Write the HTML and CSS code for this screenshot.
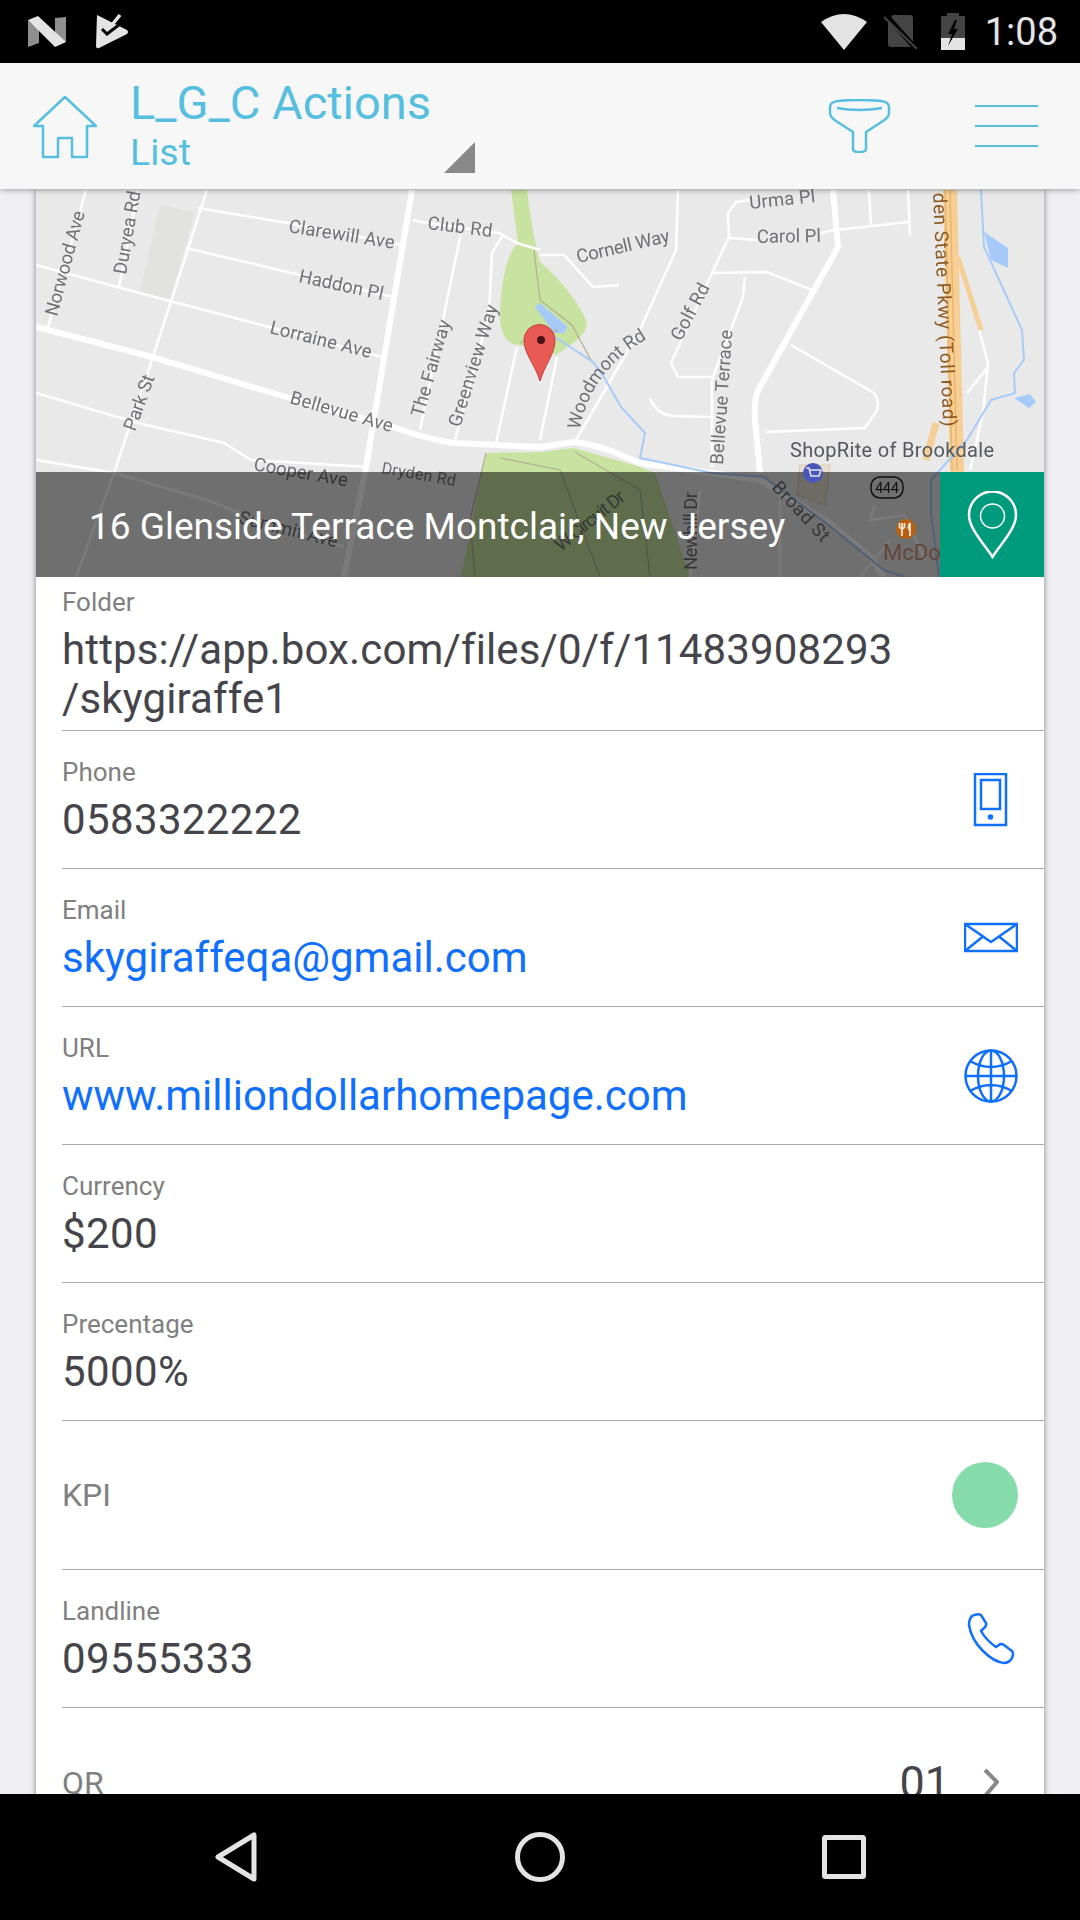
FILE: index.html
```html
<!DOCTYPE html>
<html lang="en">
<head>
<meta charset="utf-8">
<title>L_G_C Actions</title>
<link rel="stylesheet" href="styles.css">
</head>
<body>
<div class="screen">
  <div class="statusbar">
    <svg class="st-n" viewBox="0 0 38 31"><polygon fill="#8f8f8f" points="0,4 11,14 11,27 0,31"/><polygon fill="#8f8f8f" points="27,2 38,1 38,26 27,19"/><polygon fill="#e4e4e4" points="10,0 38,26 27,31 0,4"/></svg>
    <svg class="st-check" viewBox="0 0 32 34"><path fill="#e4e4e4" d="M1 0 L31 15 Q33 17 31 19 L3 33 Q0 34 0 31 Z"/><path fill="none" stroke="#e4e4e4" stroke-width="3.5" d="M15 11 L24 0"/><path fill="none" stroke="#000" stroke-width="3" d="M6 14 L11 19 L28 6"/></svg>
    <div class="st-space"></div>
    <svg class="st-wifi" viewBox="0 0 46 36"><path fill="#e4e4e4" d="M23 36 L0 8 Q23 -8 46 8 Z"/></svg>
    <svg class="st-sim" viewBox="0 0 33 34"><path fill="#444" d="M9 0 H26 Q29 0 29 3 V29 Q29 32 26 32 H7 Q4 32 4 29 V5 Z"/><path stroke="#000" stroke-width="5" d="M2 0 L33 35"/><path stroke="#444" stroke-width="2" d="M0 2 L33 34"/></svg>
    <svg class="st-batt" viewBox="0 0 24 37"><path fill="#444" d="M6 0 H18 V3 H24 V25 H0 V3 H6 Z"/><rect fill="#e4e4e4" y="25" width="24" height="12"/><path fill="#000" d="M14 7 L7 21 H11 L7 33 L17 16 H13 L16 7 Z"/></svg>
    <span class="st-time">1:08</span>
  </div>

  <header class="topbar">
    <svg class="ic-home" viewBox="0 0 64 63"><path d="M1 30 L32 1 L63 30 H54 V61 H39 V42 H25 V61 H10 V30 Z"/></svg>
    <div class="titles">
      <div class="title">L_G_C Actions</div>
      <div class="subtitle">List</div>
    </div>
    <div class="corner"></div>
    <div class="st-space"></div>
    <svg class="ic-funnel" viewBox="0 0 63 54"><path d="M2 8 Q2 3 10 2 Q31 0 53 2 Q61 3 61 8 V14 Q61 18 55 22 L38 33 V50 Q38 53 31 53 Q25 53 25 50 V33 L8 22 Q2 18 2 14 Z"/><path d="M9 9 Q31 13 54 9"/></svg>
    <div class="burger"><i></i><i></i><i></i></div>
  </header>

  <main class="content">
    <div class="card">
      <section class="map">
        <svg class="map-canvas" viewBox="36 189 1008 388">
          <rect x="36" y="189" width="1008" height="388" fill="#e9e9e9"/>
          <polygon fill="#e2e3df" points="160,205 195,212 170,300 140,292"/>
          <path class="park" d="M511 190 L518 243 C505 255 500 290 500 322 C503 340 510 345 520 345 L556 355 C570 345 590 335 586 320 C575 295 555 275 540 262 C535 245 530 215 527 190 Z"/>
          <path class="park" d="M486 453 L461 577 L690 577 L655 473 L640 467 L574 448 L540 452 Z"/>
          <path fill="#a6cbfa" d="M540 303 L568 327 L564 333 L554 333 L535 307 Z"/>
          <path class="trail" d="M534 250 L540 300 L572 325 L592 362 M520 343 L558 330"/>
          <path class="trail" d="M486 453 L470 520 L475 577 M500 458 L560 470 L600 577 M575 452 L640 490 L650 577"/>
          <g class="r-thin">
            <path d="M198 208 L288 223 L403 245"/>
            <path d="M413 220 L427 223 L499 233 L517 243 L540 250"/>
            <path d="M186 248 L300 275 L393 297"/>
            <path d="M36 265 L117 287 L269 327 L382 357"/>
            <path d="M207 190 L152 360 L114 473 L76 577"/>
            <path d="M86 190 L48 327"/>
            <path d="M138 190 L119 287"/>
            <path d="M36 393 L138 423 L224 443 L251 460 L368 467"/>
            <path d="M36 460 L114 473 L207 500 L276 527 L344 547"/>
            <path d="M461 233 L420 430"/>
            <path d="M503 235 L492 253 L489 313 L455 440"/>
            <path d="M517 347 L496 443"/>
            <path d="M557 357 L540 440"/>
            <path d="M540 255 L564 255 L593 287 L619 285"/>
            <path d="M678 190 L676 250 L640 330 L576 440"/>
            <path d="M750 200 L736 202 L728 213 L729 237 L712 273 L671 363 L678 377 L712 377"/>
            <path d="M729 238 L757 240 M820 233 L836 230 L908 222"/>
            <path d="M869 190 L871 225 M908 190 L910 235"/>
            <path d="M712 273 L767 272 L812 290"/>
            <path d="M745 277 L743 297 L712 380 L712 467"/>
            <path d="M650 398 Q656 415 675 416 L712 417"/>
            <path d="M791 345 L874 393 Q880 402 877 410 L865 428 L766 432"/>
            <path d="M988 367 L967 393 M979 330 L988 363 L983 413 L970 470"/>
            <path d="M700 490 L690 577 M780 490 L780 577 M890 540 L860 577"/>
            <path d="M875 505 L870 520 L905 515 L925 560"/>
          </g>
          <g class="r-high">
            <path d="M950 190 L957 470 L967 577" stroke-width="14"/>
            <path d="M958 257 L981 330" stroke-width="5"/>
            <path d="M936 423 L926 460" stroke-width="7"/>
          </g>
          <path class="r-high-line" d="M950 190 L957 470 M945 190 L952 470"/>
          <g class="r-major">
            <path d="M36 327 L152 357 L286 397 L393 427 Q430 440 455 443 L540 447 L574 442 Q590 444 609 450 L640 463 L712 473 L760 480 L826 520 L871 557 L884 577"/>
            <path d="M412 190 L365 473 L344 577"/>
            <path d="M833 190 L838 247 L760 387 Q752 400 756 430 L760 473"/>
          </g>
          <g class="water">
            <path d="M981 190 L984 247 L1022 330 L1024 360 L1014 373 L1015 393 L991 400 L967 440 L931 480 L931 513 L939 577"/>
            <path d="M555 337 L593 362 L604 377 L621 407 L645 433 L640 458 L712 473 L764 477 L826 523 L884 570 L905 577"/>
          </g>
          <path fill="#a6cbfa" d="M984 232 L1008 248 L1008 268 L991 260 Z"/>
          <path fill="#a6cbfa" d="M1014 398 L1030 394 L1036 402 L1029 408 Z"/>

          <text class="m" x="57" y="317" textLength="108" transform="rotate(-75 57 317)">Norwood Ave</text>
          <text class="m" x="126" y="275" textLength="84" transform="rotate(-80 126 275)">Duryea Rd</text>
          <text class="m" x="135" y="432" textLength="58" transform="rotate(-70 135 432)">Park St</text>
          <text class="m" x="288" y="232" textLength="107" transform="rotate(9 288 232)">Clarewill Ave</text>
          <text class="m" x="427" y="229" textLength="65" transform="rotate(7 427 229)">Club Rd</text>
          <text class="m" x="298" y="282" textLength="86" transform="rotate(12 298 282)">Haddon Pl</text>
          <text class="m" x="269" y="333" textLength="104" transform="rotate(14 269 333)">Lorraine Ave</text>
          <text class="m" x="289" y="403" textLength="106" transform="rotate(16 289 403)">Bellevue Ave</text>
          <text class="m" x="423" y="418" textLength="100" transform="rotate(-74 423 418)">The Fairway</text>
          <text class="m" x="460" y="428" textLength="127" transform="rotate(-72.5 460 428)">Greenview Way</text>
          <text class="m" x="253" y="470" textLength="95" transform="rotate(10 253 470)">Cooper Ave</text>
          <text class="m m-sm" x="381" y="473" textLength="75" transform="rotate(10 381 473)">Dryden Rd</text>
          <text class="m" x="238" y="523" textLength="101" transform="rotate(14 238 523)">Summit Ave</text>
          <text class="m" x="578" y="263" textLength="95" transform="rotate(-13 578 263)">Cornell Way</text>
          <text class="m" x="750" y="209" textLength="66" transform="rotate(-6 750 209)">Urma Pl</text>
          <text class="m" x="757" y="243" textLength="64" transform="rotate(-1 757 243)">Carol Pl</text>
          <text class="m" x="681" y="342" textLength="62" transform="rotate(-62 681 342)">Golf Rd</text>
          <text class="m" x="723" y="465" textLength="135" transform="rotate(-86 723 465)">Bellevue Terrace</text>
          <path id="woodmont" fill="none" d="M580 430 Q590 372 645 340"/>
          <text class="m"><textPath href="#woodmont">Woodmont Rd</textPath></text>
          <text class="m m-road" x="933" y="193" textLength="234" transform="rotate(87.5 933 193)">den State Pkwy (Toll road)</text>
          <text class="m m-poi" x="790" y="457" textLength="204">ShopRite of Brookdale</text>
          <polygon fill="#e6dfd2" stroke="#d9c9b0" points="800,465 830,465 825,505 797,495"/>
          <rect x="871" y="477" width="32" height="21" rx="9" fill="#e9e9e9" stroke="#222" stroke-width="1.5"/>
          <text class="m m-sh" x="887" y="493">444</text>
          <text class="m" x="771" y="488" textLength="75" transform="rotate(47 771 488)">Broad St</text>
          <text class="m" x="561" y="552" textLength="84" transform="rotate(-39 561 552)">W Circuit Dr</text>
          <text class="m" x="697" y="570" textLength="78" transform="rotate(-90 697 570)">Newhill Dr</text>
          <text class="m m-food" x="883" y="560">McDon</text>
          <path d="M540 381 C535 364 524 354 524 340 A15.5 15.5 0 0 1 555 340 C555 354 545 364 540 381 Z" fill="#ea5a54" stroke="#c5403c"/>
          <circle cx="541" cy="340" r="4" fill="#4a1210"/>
        </svg>
        <div class="map-bar">
          <div class="map-address">16 Glenside Terrace Montclair, New Jersey</div>
          <div class="map-pin">
            <svg class="ic-pin" viewBox="0 0 51 68"><path d="M25.5 66 C18 54 2 38 2 24 A23.5 23.5 0 0 1 49 24 C49 38 33 54 25.5 66 Z"/><circle class="thin" cx="25.5" cy="25" r="12"/></svg>
          </div>
        </div>
        <svg class="map-markers" viewBox="36 189 1008 388">
          <circle cx="813" cy="473" r="10" fill="#4a55b8"/>
          <path fill="none" stroke="#dfe2f5" stroke-width="1.6" d="M806 468 H809 L811 476 H819 L821 470 H810"/>
          <circle cx="906" cy="529" r="10" fill="#b85f10"/>
          <path fill="none" stroke="#f3e3d0" stroke-width="1.8" d="M902 523 V536 M899.500 523 V527 Q902 531 904.500 527 V523 M910 523 V536 M910 523 Q907 527 910 531"/>
        </svg>
      </section>

      <div class="row row-first">
        <div class="cell">
          <div class="label">Folder</div>
          <div class="value value-url">https://app.box.com/files/0/f/11483908293<br>/skygiraffe1</div>
        </div>
      </div>

      <div class="row">
        <div class="cell">
          <div class="label">Phone</div>
          <div class="value num">0583322222</div>
        </div>
        <svg class="ic-row" viewBox="0 0 54 54"><g class="blue"><rect x="11" y="1" width="31" height="51"/><rect x="17" y="7" width="19" height="29"/></g><circle cx="26.5" cy="44" r="2.8" fill="#0f6fff"/></svg>
      </div>

      <div class="row">
        <div class="cell">
          <div class="label">Email</div>
          <div class="value link">skygiraffeqa@gmail.com</div>
        </div>
        <svg class="ic-row" viewBox="0 0 54 54"><g class="blue"><rect x="1" y="13" width="52" height="27"/><path d="M1 13 L27 31 L53 13 M1 40 L19 25.5 M53 40 L35 25.5"/></g></svg>
      </div>

      <div class="row">
        <div class="cell">
          <div class="label">URL</div>
          <div class="value link">www.milliondollarhomepage.com</div>
        </div>
        <svg class="ic-row" viewBox="0 0 54 54"><g class="blue"><circle cx="27" cy="27" r="25.5"/><ellipse cx="27" cy="27" rx="13" ry="25.5"/><path d="M27 1.5 V52.5 M1.5 27 H52.5 M6 12 Q27 24 48 12 M6 42 Q27 30 48 42"/></g></svg>
      </div>

      <div class="row">
        <div class="cell">
          <div class="label">Currency</div>
          <div class="value num">$200</div>
        </div>
      </div>

      <div class="row">
        <div class="cell">
          <div class="label">Precentage</div>
          <div class="value num">5000%</div>
        </div>
      </div>

      <div class="row row-kpi">
        <div class="label label-flat">KPI</div>
        <div class="kpi-dot"></div>
      </div>

      <div class="row">
        <div class="cell">
          <div class="label">Landline</div>
          <div class="value num">09555333</div>
        </div>
        <svg class="ic-row" viewBox="0 0 54 54"><g class="blue"><path d="M8 4 Q13 1 17 3 L22 11 Q23 14 19 17 L17 19 Q22 28 32 35 L35 33 Q37 31 40 33 L48 39 Q50 42 48 46 Q45 51 40 51 Q30 50 19 39 Q7 27 5 13 Q5 7 8 4 Z"/></g></svg>
      </div>

      <div class="row row-or">
        <div class="label label-flat">QR</div>
        <div class="st-space"></div>
        <div class="value value-lg">01</div>
        <svg class="ic-chev" viewBox="0 0 16 30"><path d="M2 2 L14 14 L2 28"/></svg>
      </div>
    </div>
  </main>

  <footer class="navbar">
    <svg class="nav-back" viewBox="0 0 42 50"><path d="M39 3 V47 L3 25 Z"/></svg>
    <svg class="nav-home" viewBox="0 0 50 50"><circle cx="25" cy="25" r="22.5"/></svg>
    <svg class="nav-recent" viewBox="0 0 44 44"><rect x="2.500" y="2.500" width="39" height="39" rx="1"/></svg>
  </footer>
</div>
</body>
</html>
```
FILE: styles.css
```css
* { box-sizing: border-box; }
html, body { margin: 0; padding: 0; }
body { font-family: Roboto, "Liberation Sans", sans-serif; background: #efeff4; }

.screen { width: 1080px; height: 1920px; display: flex; flex-direction: column; overflow: hidden; }
.st-space { flex: 1; }

/* status bar */
.statusbar { height: 63px; flex: none; background: #000; display: flex; align-items: center; padding: 0 22px 0 28px; }
.st-n { width: 38px; height: 31px; }
.st-check { width: 32px; height: 34px; margin-left: 30px; overflow: visible; }
.st-wifi { width: 46px; height: 36px; }
.st-sim { width: 33px; height: 34px; margin-left: 17px; }
.st-batt { width: 24px; height: 37px; margin-left: 24px; }
.st-time { color: #e4e4e4; font-size: 38px; margin-left: 20px; line-height: 1; }

/* header */
.topbar { height: 126px; flex: none; background: #f7f7f7; display: flex; align-items: center; padding: 0 42px 0 33px; position: relative; z-index: 2; box-shadow: 0 1px 6px rgba(0, 0, 0, .35); color: #56bfe0; }
.ic-home { width: 64px; height: 63px; margin-top: 3px; }
.ic-home path, .ic-funnel path { fill: none; stroke: #56bfe0; stroke-width: 2.5; stroke-linejoin: round; }
.titles { margin-left: 33px; width: 314px; }
.title { font-size: 47px; line-height: 52px; white-space: nowrap; margin-top: -2px; }
.subtitle { font-size: 37.500px; line-height: 44px; margin-top: 1px; }
.corner { width: 0; height: 0; align-self: flex-start; margin-top: 79px; border-style: solid; border-width: 0 0 31px 31px; border-color: transparent transparent #888 transparent; }
.ic-funnel { width: 63px; height: 54px; margin-right: 84px; }
.burger { width: 63px; height: 42px; display: flex; flex-direction: column; justify-content: space-between; }
.burger i { display: block; height: 2px; background: #56bfe0; }

/* content */
.content { flex: 1; min-height: 0; overflow: hidden; }
.card { width: 1008px; margin-left: 36px; background: #fff; box-shadow: 0 0 6px rgba(0, 0, 0, .45); }

.map { position: relative; height: 388px; overflow: hidden; }
.map-canvas { display: block; width: 1008px; height: 388px; filter: blur(.6px); }
.map-markers { position: absolute; left: 0; top: 0; width: 1008px; height: 388px; filter: blur(.5px); }
.park { fill: #c8e39f; }
.trail { fill: none; stroke: #b3ad97; stroke-width: 1.2; }
.r-thin path { fill: none; stroke: #fff; stroke-width: 2.5; }
.r-major path { fill: none; stroke: #fff; stroke-width: 6; stroke-linejoin: round; }
.r-high path { fill: none; stroke: #f5cf96; }
.r-high-line { fill: none; stroke: #eeb468; stroke-width: 1.5; }
.water path { fill: none; stroke: #a6cbfa; stroke-width: 2; }
.m { font-family: Roboto, sans-serif; font-size: 18.500px; fill: #6f7174; }
.m-sm { font-size: 16px; }
.m-road { fill: #8d5a22; font-size: 19px; }
.m-poi { fill: #55585c; font-size: 20px; }
.m-sh { font-size: 14px; fill: #222; text-anchor: middle; }
.m-food { fill: #d09078; font-size: 22px; }

.map-bar { position: absolute; left: 0; right: 0; bottom: 0; height: 105px; background: rgba(0, 0, 0, .52); display: flex; align-items: center; }
.map-address { flex: 1; color: #fff; font-size: 37px; padding: 3px 0 0 53px; }
.map-pin { width: 104px; height: 105px; background: #009b7c; display: flex; align-items: center; justify-content: center; }
.ic-pin { width: 51px; height: 68px; }
.ic-pin path, .ic-pin circle { fill: none; stroke: #fff; stroke-width: 2.5; }
.ic-pin .thin { stroke-width: 1.5; }

/* rows */
.row { margin-left: 26px; padding: 26px 26px 24px 0; border-bottom: 1px solid #aaa; display: flex; align-items: center; justify-content: space-between; min-height: 138px; }
.row-first { padding-top: 9px; padding-bottom: 7px; min-height: 154px; }
.row-kpi { min-height: 149px; padding-top: 0; padding-bottom: 0; }
.row-or { border-bottom: 0; padding: 50px 0 0; min-height: 0; }
.label { font-size: 26px; line-height: 30px; color: #808080; margin-bottom: 8px; }
.label-flat { font-size: 32px; margin-bottom: 0; }
.value { font-size: 42px; line-height: 49px; color: #44444a; }
.value-url { letter-spacing: .13px; }
.value-lg { font-size: 45px; }
.num { letter-spacing: .37px; }
.link { color: #0f6fff; }
.ic-row { width: 54px; height: 54px; flex: none; margin-bottom: 2px; }
.blue, .blue * { fill: none; stroke: #0f6fff; stroke-width: 2.5; }
.kpi-dot { width: 66px; height: 66px; border-radius: 50%; background: #86dbab; }
.ic-chev { width: 16px; height: 30px; margin: 0 45px 0 33px; }
.ic-chev path { fill: none; stroke: #888; stroke-width: 4; }

/* nav */
.navbar { height: 126px; flex: none; background: #000; display: flex; align-items: center; padding-left: 215px; position: relative; z-index: 2; }
.navbar svg * { fill: none; stroke: #e4e4e4; stroke-width: 5; stroke-linejoin: round; }
.nav-back { width: 42px; height: 50px; }
.nav-home { width: 50px; height: 50px; margin-left: 258px; }
.nav-recent { width: 44px; height: 44px; margin-left: 257px; }
```
